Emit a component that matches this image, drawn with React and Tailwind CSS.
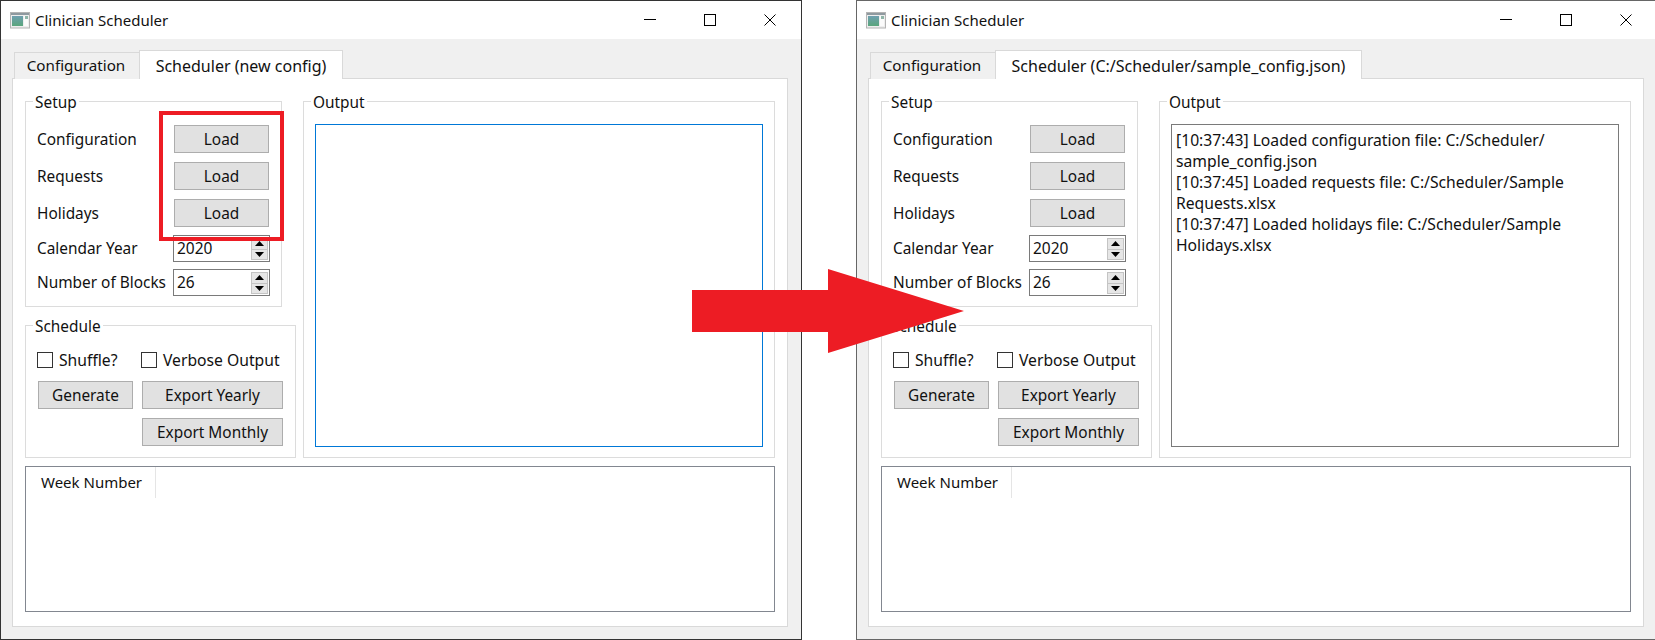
const F = "[font-family:'Noto_Sans',sans-serif]";

function Btn({ w, children, className = "" }) {
  return (
    <div className={`h-[28px] ${w} shrink-0 bg-[#e1e1e1] border border-[#adadad] flex items-center justify-center pt-[2px] ${className}`}>
      {children}
    </div>
  );
}

function Spin({ value }) {
  return (
    <div className="w-[97px] h-[27px] border border-[#7a7a7a] bg-white flex items-center justify-between pl-[3px] pr-[1px] text-[15.5px]">
      <span>{value}</span>
      <div className="flex flex-col">
        <div className="w-[17px] h-[12px] bg-[#e6e6e6] border border-[#c4c4c4] flex items-center justify-center">
          <svg width="9" height="5" viewBox="0 0 9 5"><path d="M4.5 0L9 5H0z" fill="#000" /></svg>
        </div>
        <div className="w-[17px] h-[11px] -mt-px bg-[#e6e6e6] border border-[#c4c4c4] flex items-center justify-center">
          <svg width="9" height="5" viewBox="0 0 9 5"><path d="M0 0H9L4.5 5z" fill="#000" /></svg>
        </div>
      </div>
    </div>
  );
}

function Group({ title, className = "", children }) {
  return (
    <div className={`border border-[#dcdcdc] ${className}`}>
      <div className="w-fit -mt-[10px] ml-[7px] px-[2px] bg-white h-[22px] leading-[22px]">{title}</div>
      {children}
    </div>
  );
}

function Check({ label }) {
  return (
    <div className="flex items-center gap-[6px]">
      <div className="w-[16px] h-[16px] border border-[#333] bg-white" />
      <span className="text-[15.7px] pt-[2px]">{label}</span>
    </div>
  );
}

function AppIcon() {
  return (
    <svg width="20" height="17" viewBox="0 0 20 17" className="shrink-0">
      <defs>
        <linearGradient id="g" x1="0" y1="0" x2="0" y2="1">
          <stop offset="0" stopColor="#6f9fb0" />
          <stop offset="1" stopColor="#5aa67c" />
        </linearGradient>
      </defs>
      <rect x="0.5" y="0.5" width="19" height="15.5" fill="#eeeeee" stroke="#b4b4b4" />
      <rect x="1" y="1" width="18" height="2" fill="#8f9aa0" />
      <rect x="2" y="4" width="11" height="10" fill="url(#g)" />
      <rect x="14" y="4" width="4" height="10" fill="#fbfbfb" />
      <rect x="15" y="4" width="3" height="3" fill="#8fb5a8" />
    </svg>
  );
}

function Window({ tab, tabWidth, border, focus, lines }) {
  return (
    <div className={`w-[802px] h-[640px] shrink-0 border ${border} bg-[#f0f0f0] flex flex-col`}>
      <div className="h-[38px] bg-white flex items-center pl-[9px] shrink-0">
        <AppIcon />
        <span className="ml-[5px] text-[15px] text-[#111]">Clinician Scheduler</span>
        <div className="ml-auto flex items-center gap-[48px] pr-[25px]">
          <svg width="12" height="12" viewBox="0 0 12 12"><path d="M0 5.5H12" stroke="#000" /></svg>
          <svg width="12" height="12" viewBox="0 0 12 12"><rect x="0.5" y="0.5" width="11" height="11" fill="none" stroke="#000" /></svg>
          <svg width="12" height="12" viewBox="0 0 12 12"><path d="M0.5 0.5L11.5 11.5M11.5 0.5L0.5 11.5" stroke="#000" /></svg>
        </div>
      </div>
      <div className="flex-1 flex flex-col pt-[11px] pl-[11px] pr-[13px] pb-[12px]">
        <div className="flex items-end pl-[2px] h-[29px] -mb-px relative">
          <div className="w-[126px] h-[27px] bg-[#f0f0f0] border border-[#d9d9d9] border-b-0 flex justify-center pt-[1px] pr-[2px] text-[15.2px]">Configuration</div>
          <div className={`${tabWidth} h-[29px] -ml-px bg-white border border-[#d9d9d9] border-b-0 flex items-start pt-[3px] justify-center relative z-10 text-[16px]`}>{tab}</div>
        </div>
        <div className="flex-1 bg-white border border-[#d9d9d9] pt-[22px] pl-[12px] pr-[12px] flex flex-col gap-[8px]">
          <div className="flex gap-[7px]">
            <div className="w-[271px] flex flex-col gap-[18px]">
              <Group title="Setup" className="w-[257px] h-[206px]">
                <div className="pl-[11px] pr-[11px] pt-[11px] flex flex-col">
                  <div className="flex items-center justify-between h-[28px]"><span className="pt-[2px]">Configuration</span><Btn w="w-[95px]" className="mr-[1px]">Load</Btn></div>
                  <div className="flex items-center justify-between h-[28px] mt-[9px]"><span className="pt-[2px]">Requests</span><Btn w="w-[95px]" className="mr-[1px]">Load</Btn></div>
                  <div className="flex items-center justify-between h-[28px] mt-[9px]"><span className="pt-[2px]">Holidays</span><Btn w="w-[95px]" className="mr-[1px]">Load</Btn></div>
                  <div className="flex items-center justify-between h-[27px] mt-[8px]"><span>Calendar Year</span><Spin value="2020" /></div>
                  <div className="flex items-center justify-between h-[27px] mt-[7px]"><span>Number of Blocks</span><Spin value="26" /></div>
                </div>
              </Group>
              <Group title="Schedule" className="h-[133px]">
                <div className="pl-[11px] pt-[12px]">
                  <div className="flex items-center gap-[17px] h-[20px]">
                    <div className="w-[87px]"><Check label="Shuffle?" /></div>
                    <Check label="Verbose Output" />
                  </div>
                  <div className="flex gap-[9px] pl-[1px] mt-[11px]">
                    <Btn w="w-[95px]">Generate</Btn>
                    <div className="flex flex-col gap-[9px]">
                      <Btn w="w-[141px]">Export Yearly</Btn>
                      <Btn w="w-[141px]">Export Monthly</Btn>
                    </div>
                  </div>
                </div>
              </Group>
            </div>
            <Group title="Output" className="flex-1 h-[357px]">
              <div className={`mx-[11px] mt-[10px] h-[323px] border ${focus} px-[4px] py-[5px] leading-[21px] text-[15.7px]`}>
                {lines.map((l) => <div key={l}>{l}</div>)}
              </div>
            </Group>
          </div>
          <div className="h-[146px] border border-[#828790]">
            <div className="w-[130px] h-[31px] border-r border-[#e5e5e5] flex items-center pl-[15px] text-[15px]">Week Number</div>
          </div>
        </div>
      </div>
    </div>
  );
}

export default function App() {
  return (
    <div className={`relative w-[1655px] h-[640px] overflow-hidden bg-white flex gap-[54px] text-[15.4px] text-[#111] ${F}`}>
      <Window tab="Scheduler (new config)" tabWidth="w-[204px]" border="border-[#333333]" focus="border-[#0078d7]" lines={[]} />
      <Window
        tab="Scheduler (C:/Scheduler/sample_config.json)"
        tabWidth="w-[367px]"
        border="border-[#666666]"
        focus="border-[#7a7a7a]"
        lines={[
          "[10:37:43] Loaded configuration file: C:/Scheduler/",
          "sample_config.json",
          "[10:37:45] Loaded requests file: C:/Scheduler/Sample",
          "Requests.xlsx",
          "[10:37:47] Loaded holidays file: C:/Scheduler/Sample",
          "Holidays.xlsx",
        ]}
      />
      <div className="absolute left-[159px] top-[111px] w-[125px] h-[130px] border-[4px] border-[#ed1c24]" />
      <svg className="absolute left-[692px] top-[269px]" width="273" height="84" viewBox="0 0 273 84">
        <path d="M0 21H136V0L272 42L136 84V63H0z" fill="#ed1c24" />
      </svg>
    </div>
  );
}
